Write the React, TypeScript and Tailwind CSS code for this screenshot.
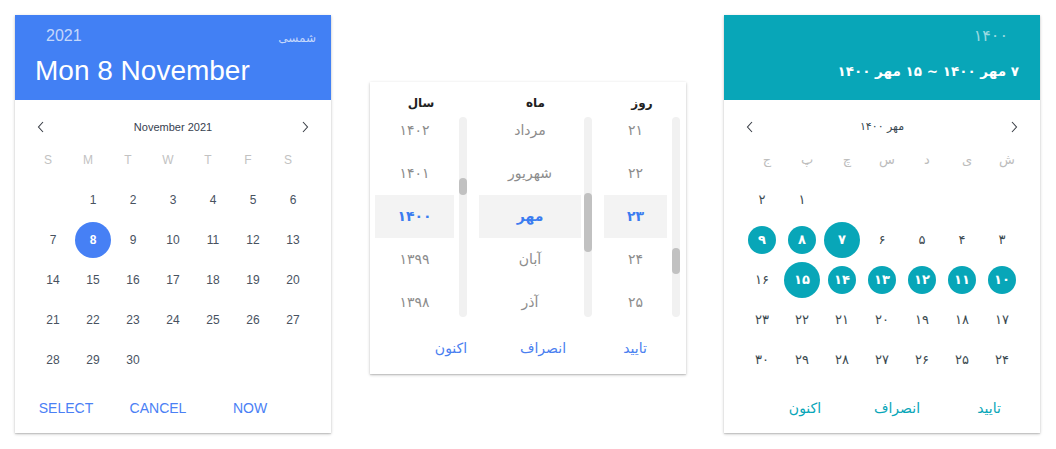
import React from "react";

const FA = "۰۱۲۳۴۵۶۷۸۹";
const toFa = (n: number | string) => String(n).replace(/\d/g, (d) => FA[+d]);

const Chevron = ({ dir }: { dir: "left" | "right" }) => (
    <svg width="8" height="12" viewBox="0 0 8 12" fill="none" className="shrink-0">
        <path
            d={dir === "left" ? "M6 1 L1.5 6 L6 11" : "M2 1 L6.5 6 L2 11"}
            stroke="#3a3f47"
            strokeWidth="1.1"
        />
    </svg>
);

const cardShadow =
    "shadow-[0_1px_3px_rgba(0,0,0,0.22),0_1px_1px_rgba(0,0,0,0.1)]";

const gregRows: (number | null)[][] = [
    [null, 1, 2, 3, 4, 5, 6],
    [7, 8, 9, 10, 11, 12, 13],
    [14, 15, 16, 17, 18, 19, 20],
    [21, 22, 23, 24, 25, 26, 27],
    [28, 29, 30, null, null, null, null],
];

const jalaliRows: (number | null)[][] = [
    [null, null, null, null, null, 1, 2],
    [3, 4, 5, 6, 7, 8, 9],
    [10, 11, 12, 13, 14, 15, 16],
    [17, 18, 19, 20, 21, 22, 23],
    [24, 25, 26, 27, 28, 29, 30],
];

const GregorianCard = () => (
    <div className={`w-[316px] h-[418px] bg-white flex flex-col font-['Liberation_Sans',sans-serif] ${cardShadow}`}>
        <div className="h-[85px] bg-[#4280f4] flex flex-col">
            <div className="flex justify-between items-center pl-[31px] pr-[15px] pt-[11px] h-[31px]">
                <span className="text-[16px] leading-[20px] text-white/70">2021</span>
                <span className="text-[12px] leading-[20px] text-white/70 font-['DejaVu_Sans',sans-serif] mt-[4px]">
                    شمسی
                </span>
            </div>
            <div className="pl-[20px] mt-[9px] text-[28px] leading-[32px] text-white">
                Mon 8 November
            </div>
        </div>

        <div className="flex items-center justify-between px-[22px] mt-[14px] h-[26px]">
            <Chevron dir="left" />
            <span className="text-[11px] text-[#37414f]">November 2021</span>
            <Chevron dir="right" />
        </div>

        <div className="grid grid-cols-7 w-[280px] ml-[13px] h-[40px] items-center">
            {["S", "M", "T", "W", "T", "F", "S"].map((d, i) => (
                <div key={i} className="text-center text-[12px] text-[#c2c2c2]">
                    {d}
                </div>
            ))}
        </div>

        <div className="w-[280px] ml-[18px]">
            {gregRows.map((row, r) => (
                <div key={r} className="grid grid-cols-7 h-[40px]">
                    {row.map((d, i) => (
                        <div key={i} className="flex items-center justify-center">
                            {d === 8 ? (
                                <div className="w-[36px] h-[36px] rounded-full bg-[#4680f5] flex items-center justify-center text-white text-[12px] font-bold">
                                    8
                                </div>
                            ) : (
                                <span className="text-[12px] text-[#48525f]">{d ?? ""}</span>
                            )}
                        </div>
                    ))}
                </div>
            ))}
        </div>

        <div className="flex pl-[5px] pt-[8px]">
            {["SELECT", "CANCEL", "NOW"].map((b) => (
                <div key={b} className="w-[92px] h-[40px] flex items-center justify-center text-[14px] text-[#4a80f5]">
                    {b}
                </div>
            ))}
        </div>
    </div>
);

interface WheelProps {
    title: string;
    items: string[];
    thumbTop: string;
    thumbH: string;
    widthClass: string;
    gapClass: string;
}

const Wheel = ({ title, items, widthClass, gapClass, thumbTop, thumbH }: WheelProps) => (
    <div className="flex flex-col">
        <div className="h-[20px] flex items-center justify-center text-[12px] font-bold text-[#222]">
            {title}
        </div>
        <div className={`flex mt-[4px] ${gapClass}`}>
            <div className="relative w-[8px] h-[200px] rounded-full bg-[#f1f1f1]">
                <div className={`absolute left-0 w-[8px] rounded-full bg-[#c1c1c1] ${thumbTop} ${thumbH}`} />
            </div>
            <div className={`h-[200px] overflow-hidden ${widthClass}`}>
                <div className="-mt-[8px]">
                    {items.map((it, i) => (
                        <div
                            key={i}
                            className={`h-[43px] flex items-center justify-center text-[14px] ${
                                i === 2
                                    ? "bg-[#f3f3f3] text-[#3b7cf0] font-bold"
                                    : "text-[#8c8c8c]"
                            }`}
                        >
                            {it}
                        </div>
                    ))}
                </div>
            </div>
        </div>
    </div>
);

const WheelCard = () => (
    <div
        dir="rtl"
        className={`w-[316px] h-[292px] bg-white flex flex-col font-['DejaVu_Sans',sans-serif] ${cardShadow}`}
    >
        <div className="flex gap-[12px] px-[6px] pt-[11px]">
            <Wheel
                title="روز"
                items={[21, 22, 23, 24, 25].map(toFa)}
                widthClass="w-[63px]"
                gapClass="gap-[5px]"
                thumbTop="top-[131px]"
                thumbH="h-[26px]"
            />
            <Wheel
                title="ماه"
                items={["مرداد", "شهریور", "مهر", "آبان", "آذر"]}
                widthClass="w-[102px]"
                gapClass="gap-[3px]"
                thumbTop="top-[76px]"
                thumbH="h-[59px]"
            />
            <Wheel
                title="سال"
                items={[1402, 1401, 1400, 1399, 1398].map(toFa)}
                widthClass="w-[79px]"
                gapClass="gap-[5px]"
                thumbTop="top-[61px]"
                thumbH="h-[17px]"
            />
        </div>
        <div className="flex pr-[5px] mt-[11px]">
            {["تایید", "انصراف", "اکنون"].map((b) => (
                <div key={b} className="w-[92px] h-[40px] flex items-center justify-center text-[14px] text-[#4a80f0]">
                    {b}
                </div>
            ))}
        </div>
    </div>
);

const JalaliCard = () => (
    <div
        dir="rtl"
        className={`w-[316px] h-[418px] bg-white flex flex-col font-['DejaVu_Sans',sans-serif] ${cardShadow}`}
    >
        <div className="h-[85px] bg-[#08a6b8] flex flex-col">
            <div className="pr-[32px] pt-[11px] h-[31px] flex items-center">
                <span className="text-[16px] leading-[20px] text-white/60">{toFa(1400)}</span>
            </div>
            <div className="pr-[21px] mt-[13px] text-[13.5px] leading-[24px] font-bold text-white">
                {`${toFa(7)} مهر ${toFa(1400)} ~ ${toFa(15)} مهر ${toFa(1400)}`}
            </div>
        </div>

        <div dir="ltr" className="flex items-center justify-between px-[22px] mt-[14px] h-[26px]">
            <Chevron dir="left" />
            <span dir="rtl" className="text-[11px] text-[#37474f]">
                مهر {toFa(1400)}
            </span>
            <Chevron dir="right" />
        </div>

        <div className="grid grid-cols-7 w-[280px] ms-[13px] h-[40px] items-center">
            {["ش", "ی", "د", "س", "چ", "پ", "ج"].map((d, i) => (
                <div key={i} className="text-center text-[13px] text-[#bcbcbc]">
                    {d}
                </div>
            ))}
        </div>

        <div className="w-[280px] ms-[18px]">
            {jalaliRows.map((row, r) => (
                <div key={r} className="grid grid-cols-7 h-[40px]">
                    {row.map((d, i) => {
                        const edge = d === 7 || d === 15;
                        const inRange = d !== null && d > 7 && d < 15;
                        return (
                            <div key={i} className="flex items-center justify-center">
                                {edge ? (
                                    <div className="w-[36px] h-[36px] rounded-full bg-[#08a6b8] flex items-center justify-center text-white text-[13px] font-bold">
                                        {toFa(d as number)}
                                    </div>
                                ) : inRange ? (
                                    <div className="w-[28px] h-[28px] rounded-full bg-[#08a6b8] flex items-center justify-center text-white text-[13px] font-bold">
                                        {toFa(d as number)}
                                    </div>
                                ) : (
                                    <span className="text-[13px] text-[#3b4a50]">{d ? toFa(d) : ""}</span>
                                )}
                            </div>
                        );
                    })}
                </div>
            ))}
        </div>

        <div className="flex pr-[5px] pt-[8px]">
            {["تایید", "انصراف", "اکنون"].map((b) => (
                <div key={b} className="w-[92px] h-[40px] flex items-center justify-center text-[14px] text-[#08a6b8]">
                    {b}
                </div>
            ))}
        </div>
    </div>
);

const App = () => {
    return (
        <div className="w-[1056px] h-[449px] bg-white flex items-start pl-[15px] pt-[15px]">
            <GregorianCard />
            <div className="ml-[39px] mt-[67px]">
                <WheelCard />
            </div>
            <div className="ml-[38px]">
                <JalaliCard />
            </div>
        </div>
    );
};

export default App;
